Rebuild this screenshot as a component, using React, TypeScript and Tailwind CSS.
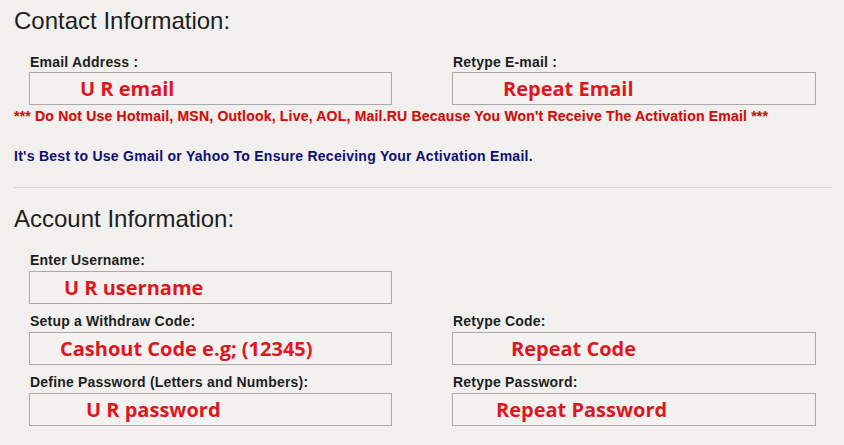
import React from 'react';

type Field = {
  label: string;
  value: string;
  indent: string;
};

function InputBox({ label, value, indent, labelGap = 'mt-[3px]' }: Field & { labelGap?: string }) {
  return (
    <div className="flex flex-col">
      <label className="h-4 text-[14px] font-bold leading-4 tracking-[0.2px] text-[#1e1e1e] font-['Liberation_Sans',Arial,sans-serif] pl-px">
        {label}
      </label>
      <div
        className={`${labelGap} flex h-[33px] items-center border border-[#a9a9a9] bg-[#f3f2f0] font-['Open_Sans',sans-serif] text-[20px] font-bold leading-[20px] text-[#e0161e]`}
      >
        <span className={indent}>{value}</span>
      </div>
    </div>
  );
}

export default function App() {
  return (
    <div className="h-[445px] w-[844px] overflow-hidden bg-[#f1f0ee] pl-[14px] font-['Liberation_Sans',Arial,sans-serif]">
      {/* Contact Information */}
      <h2 className="pt-[7px] text-[24px] leading-[28px] font-normal text-[#1d1d1d]">Contact Information:</h2>

      <div className="mt-[19px] grid grid-cols-[363px_364px] gap-x-[60px] pl-[15px]">
        <InputBox label="Email Address :" value="U R email" indent="pl-[50px]" labelGap="mt-[2px]" />
        <InputBox label="Retype E-mail :" value="Repeat Email" indent="pl-[50px]" labelGap="mt-[2px]" />
      </div>

      <p className="mt-[3px] h-4 text-[14px] font-bold leading-4 text-[#cc0f0f] tracking-[0.2px] [text-shadow:0_0_1px_rgba(220,60,40,0.35)]">
        *** Do Not Use Hotmail, MSN, Outlook, Live, AOL, Mail.RU Because You Won't Receive The Activation Email ***
      </p>

      <p className="mt-[24px] h-4 text-[14px] font-bold leading-4 tracking-[0.27px] text-[#0e0e78]">
        It's Best to Use Gmail or Yahoo To Ensure Receiving Your Activation Email.
      </p>

      <div className="mt-[23px] mr-[12px] h-px bg-[#d6d5d3]" />

      {/* Account Information */}
      <h2 className="mt-[17px] text-[24px] leading-[28px] font-normal text-[#1d1d1d]">Account Information:</h2>

      <div className="mt-[19px] grid grid-cols-[363px_364px] gap-x-[60px] gap-y-[9px] pl-[15px]">
        <InputBox label="Enter Username:" value="U R username" indent="pl-[34px]" />
        <div />
        <InputBox label="Setup a Withdraw Code:" value="Cashout Code e.g; (12345)" indent="pl-[30px]" />
        <InputBox label="Retype Code:" value="Repeat Code" indent="pl-[58px]" />
        <InputBox label="Define Password (Letters and Numbers):" value="U R password" indent="pl-[56px]" />
        <InputBox label="Retype Password:" value="Repeat Password" indent="pl-[43px]" />
      </div>
    </div>
  );
}
